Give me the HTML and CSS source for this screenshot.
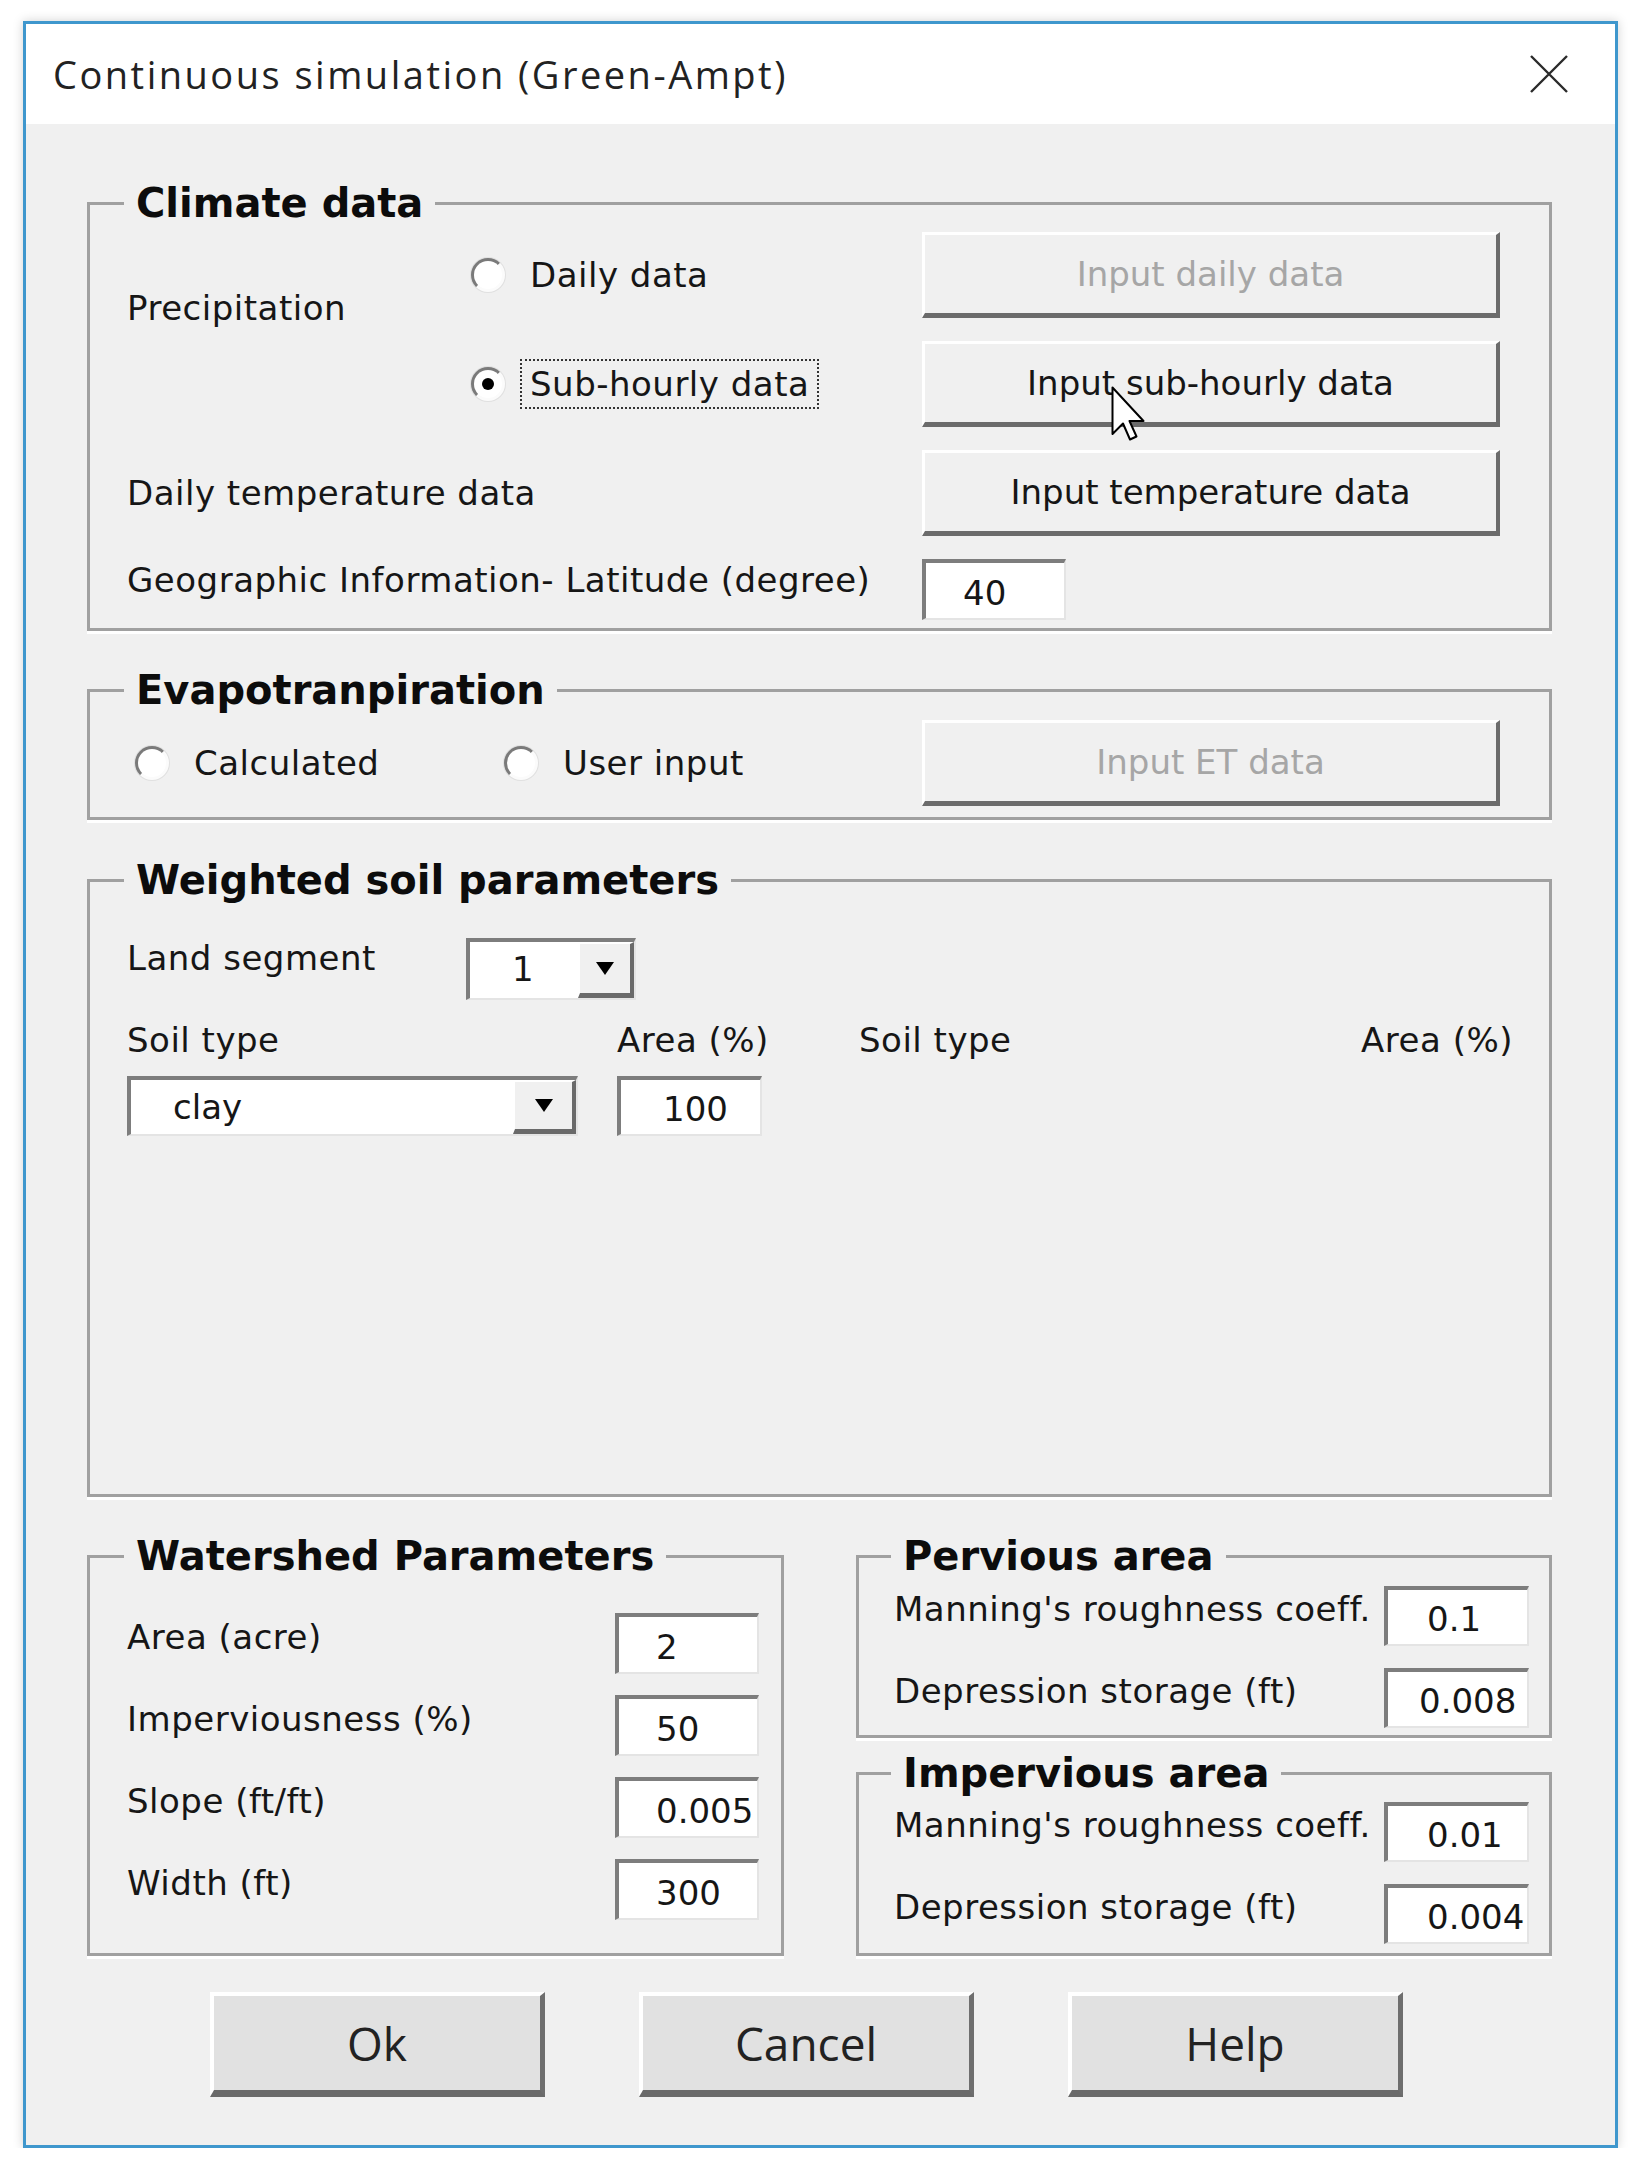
FILE: index.html
```html
<!DOCTYPE html>
<html lang="en">
<head>
    <meta charset="UTF-8">
    <meta name="viewport" content="width=device-width, initial-scale=1.0">
    <title>Continuous simulation (Green-Ampt)</title>
    <link rel="stylesheet" href="styles.css">
</head>
<body>
    <div class="window">
        <div class="titlebar">
            <span class="title">Continuous simulation (Green-Ampt)</span>
            <svg class="close" width="40" height="40" viewBox="0 0 40 40">
                <path d="M2 2 L38 38 M38 2 L2 38" stroke="#2b2b2b" stroke-width="2.4" fill="none"/>
            </svg>
        </div>

        <div class="dialog-body">
            <fieldset class="group climate">
                <legend>Climate data</legend>
                <div class="climate-grid">
                    <div class="lbl precip">Precipitation</div>
                    <div class="radio r-daily"><span class="circle"></span><span class="text">Daily data</span></div>
                    <button class="btn" disabled>Input daily data</button>
                    <div class="radio on focus r-sub"><span class="circle"></span><span class="text">Sub-hourly data</span></div>
                    <button class="btn hover">Input sub-hourly data
                        <svg class="cursor" width="36" height="56" viewBox="0 0 36 56">
                            <path d="M1.5 1.5 L1.5 48 L12 37.5 L19 53.5 L25.5 50.5 L18.5 35 L32.5 35 Z" fill="#fff" stroke="#000" stroke-width="2" stroke-linejoin="round"/>
                        </svg>
                    </button>
                    <div class="lbl temp">Daily temperature data</div>
                    <button class="btn">Input temperature data</button>
                    <div class="lbl geo">Geographic Information- Latitude (degree)</div>
                    <input class="field lat" type="text" value="40">
                </div>
            </fieldset>

            <fieldset class="group evap">
                <legend>Evapotranpiration</legend>
                <div class="evap-grid">
                    <div class="radio r-calc"><span class="circle"></span><span class="text">Calculated</span></div>
                    <div class="radio"><span class="circle"></span><span class="text">User input</span></div>
                    <button class="btn" disabled>Input ET data</button>
                </div>
            </fieldset>

            <fieldset class="group soil">
                <legend>Weighted soil parameters</legend>
                <div class="land-row">
                    <div class="lbl land-lbl">Land segment</div>
                    <div class="combo land">
                        <span class="combo-val">1</span>
                        <span class="combo-btn"><span class="arrow"></span></span>
                    </div>
                </div>
                <div class="soil-grid">
                    <div class="lbl">Soil type</div>
                    <div class="lbl">Area (%)</div>
                    <div class="lbl soil-2">Soil type</div>
                    <div class="lbl area-2">Area (%)</div>
                    <div class="combo clay">
                        <span class="combo-val">clay</span>
                        <span class="combo-btn"><span class="arrow"></span></span>
                    </div>
                    <input class="field area" type="text" value="100">
                </div>
            </fieldset>

            <div class="bottom-row">
                <fieldset class="group watershed">
                    <legend>Watershed Parameters</legend>
                    <div class="param-grid">
                        <div class="lbl">Area (acre)</div>
                        <input class="field" type="text" value="2">
                        <div class="lbl">Imperviousness (%)</div>
                        <input class="field" type="text" value="50">
                        <div class="lbl">Slope (ft/ft)</div>
                        <input class="field" type="text" value="0.005">
                        <div class="lbl">Width (ft)</div>
                        <input class="field" type="text" value="300">
                    </div>
                </fieldset>

                <div class="surface-col">
                    <fieldset class="group surface pervious">
                        <legend>Pervious area</legend>
                        <div class="param-grid">
                            <div class="lbl">Manning's roughness coeff.</div>
                            <input class="field" type="text" value="0.1">
                            <div class="lbl">Depression storage (ft)</div>
                            <input class="field tight" type="text" value="0.008">
                        </div>
                    </fieldset>
                    <fieldset class="group surface impervious">
                        <legend>Impervious area</legend>
                        <div class="param-grid">
                            <div class="lbl">Manning's roughness coeff.</div>
                            <input class="field" type="text" value="0.01">
                            <div class="lbl">Depression storage (ft)</div>
                            <input class="field" type="text" value="0.004">
                        </div>
                    </fieldset>
                </div>
            </div>

            <div class="actions">
                <button class="big-btn">Ok</button>
                <button class="big-btn">Cancel</button>
                <button class="big-btn">Help</button>
            </div>
        </div>
    </div>
</body>
</html>
```

FILE: styles.css
```css
body {
    margin: 0;
    padding: 21px 0 0 23px;
    background-color: #ffffff;
    font-family: 'DejaVu Sans', Verdana, sans-serif;
    color: #161616;
}

.window {
    box-sizing: border-box;
    width: 1595px;
    border: 3px solid #3f97cd;
    background-color: #f0f0f0;
    box-shadow: 0 0 10px rgba(0,0,0,0.18);
}

.titlebar {
    height: 100px;
    background: #ffffff;
    display: flex;
    align-items: center;
    justify-content: space-between;
    padding: 0 46px 0 27px;
}

.title {
    font-family: 'Open Sans', 'Noto Sans', sans-serif;
    font-size: 38px;
    letter-spacing: 2.5px;
    color: #222;
}

.close {
    display: block;
}

.dialog-body {
    padding: 55px 63px 48px 61px;
}

/* group boxes */
.group {
    margin: 0;
    min-width: 0;
    border: 3px solid #a0a0a0;
    box-shadow: 0 3px 0 #ffffff;
}

.group legend {
    padding: 0 12px;
    margin-left: -3px;
    font-size: 40px;
    line-height: 48px;
    font-weight: bold;
    color: #0c0c0c;
}

.lbl {
    font-size: 34px;
    line-height: 40px;
    letter-spacing: 0.5px;
    white-space: nowrap;
}

/* climate */
.climate {
    padding: 5px 49px 8px 37px;
}

.climate-grid {
    display: grid;
    grid-template-columns: 343px 452px 578px;
    grid-template-rows: 86px 86px 86px 61px;
    row-gap: 23px;
}

.precip {
    grid-column: 1;
    grid-row: 1 / 3;
    align-self: center;
    margin-bottom: 44px;
}

.r-daily { grid-column: 2; grid-row: 1; }
.r-sub { grid-column: 2; grid-row: 2; }
.climate-grid .btn { grid-column: 3; }
.temp { grid-column: 1 / 3; grid-row: 3; align-self: center; }
.geo { grid-column: 1 / 3; grid-row: 4; align-self: center; margin-bottom: 20px; }
.lat { grid-column: 3; grid-row: 4; width: 144px; }

/* radios */
.radio {
    display: flex;
    align-items: center;
    align-self: center;
    margin-left: 1px;
}

.radio .circle {
    box-sizing: border-box;
    width: 34px;
    height: 34px;
    flex: none;
    border-radius: 50%;
    border: 3px solid;
    border-color: #7a7a7a #fbfbfb #fbfbfb #7a7a7a;
    background: #ffffff;
    box-shadow: 0 0 0 1px #e0e0e0;
    display: flex;
    align-items: center;
    justify-content: center;
}

.radio.on .circle::after {
    content: "";
    width: 12px;
    height: 12px;
    border-radius: 50%;
    background: #000;
}

.radio .text {
    margin-left: 15px;
    padding: 3px 8px;
    border: 2px dotted transparent;
    font-size: 34px;
    line-height: 40px;
    letter-spacing: 0.5px;
    white-space: nowrap;
}

.radio.focus .text {
    border-color: #333;
}

/* buttons */
.btn {
    position: relative;
    box-sizing: border-box;
    width: 578px;
    height: 86px;
    padding: 0;
    background: #f0f0f0;
    border-style: solid;
    border-width: 3px 4px 5px 3px;
    border-color: #ffffff #6b6b6b #6b6b6b #ffffff;
    font-family: 'DejaVu Sans', Verdana, sans-serif;
    font-size: 34px;
    color: #161616;
}

.btn:disabled {
    color: #a6a6a6;
}

.cursor {
    position: absolute;
    left: 186px;
    top: 42px;
}

/* text boxes */
.field {
    box-sizing: border-box;
    height: 61px;
    width: 144px;
    margin: 0;
    padding: 4px 0 0 37px;
    background: #ffffff;
    border-style: solid;
    border-width: 4px 2px 2px 4px;
    border-color: #7d7d7d #e4e4e4 #e4e4e4 #7d7d7d;
    font-family: 'DejaVu Sans', Verdana, sans-serif;
    font-size: 34px;
    color: #161616;
    outline: none;
}

.field.tight {
    padding-left: 31px;
}

/* evapotranspiration */
.evap {
    margin-top: 35px;
    padding: 6px 49px 11px 37px;
}

.evap-grid {
    display: grid;
    grid-template-columns: 376px 419px 578px;
    align-items: center;
}

.r-calc {
    margin-left: 8px;
}

/* soil */
.soil {
    margin-top: 36px;
    padding: 34px 36px 358px 37px;
}

.land-row {
    display: flex;
    align-items: flex-start;
    margin-bottom: 20px;
}

.land-lbl {
    width: 339px;
}

.combo {
    box-sizing: border-box;
    display: flex;
    align-items: stretch;
    background: #ffffff;
    border-style: solid;
    border-width: 4px 2px 2px 4px;
    border-color: #7d7d7d #e4e4e4 #e4e4e4 #7d7d7d;
}

.combo.land {
    width: 170px;
    height: 62px;
}

.combo.clay {
    width: 451px;
    height: 60px;
}

.combo-val {
    flex: 1;
    padding-left: 42px;
    font-size: 34px;
    line-height: 54px;
}

.combo-btn {
    box-sizing: border-box;
    width: 56px;
    display: flex;
    align-items: center;
    justify-content: center;
    background: #f0f0f0;
    border-style: solid;
    border-width: 2px 4px 5px 2px;
    border-color: #ffffff #6a6a6a #6a6a6a #ffffff;
}

.clay .combo-btn {
    width: 63px;
}

.arrow {
    width: 0;
    height: 0;
    border-left: 9px solid transparent;
    border-right: 9px solid transparent;
    border-top: 13px solid #000;
}

.soil-grid {
    display: grid;
    grid-template-columns: 451px 145px 1fr auto;
    grid-template-rows: 40px 60px;
    column-gap: 39px;
    row-gap: 16px;
}

.soil-2 {
    margin-left: 58px;
}

.area-2 {
    text-align: right;
}

.field.area {
    width: 145px;
    height: 60px;
    padding-left: 42px;
}

/* bottom group boxes */
.bottom-row {
    display: flex;
    gap: 72px;
    margin-top: 35px;
}

.watershed {
    width: 697px;
    box-sizing: border-box;
    padding: 33px 22px 33px 37px;
}

.watershed .param-grid {
    grid-template-columns: 1fr 144px;
    grid-auto-rows: 61px;
    row-gap: 21px;
}

.param-grid {
    display: grid;
    align-items: center;
}

.param-grid .lbl {
    margin-bottom: 14px;
}

.surface-col {
    flex: 1;
    display: flex;
    flex-direction: column;
}

.surface {
    padding: 6px 20px 7px 35px;
}

.impervious {
    margin-top: 11px;
    padding: 5px 20px 9px 35px;
}

.surface .param-grid {
    grid-template-columns: 1fr 145px;
    grid-auto-rows: 60px;
    row-gap: 22px;
}

.surface .field {
    width: 145px;
    height: 60px;
    padding-left: 39px;
}

.surface .field.tight {
    padding-left: 31px;
}

/* dialog buttons */
.actions {
    display: flex;
    gap: 94px;
    margin: 36px 0 0 123px;
}

.big-btn {
    box-sizing: border-box;
    width: 335px;
    height: 105px;
    padding: 0;
    background: #e1e1e1;
    border-style: solid;
    border-width: 4px 5px 7px 4px;
    border-color: #ffffff #6e6e6e #6a6a6a #ffffff;
    font-family: 'Open Sans', 'Noto Sans', sans-serif;
    font-size: 46px;
    color: #222;
}
```
